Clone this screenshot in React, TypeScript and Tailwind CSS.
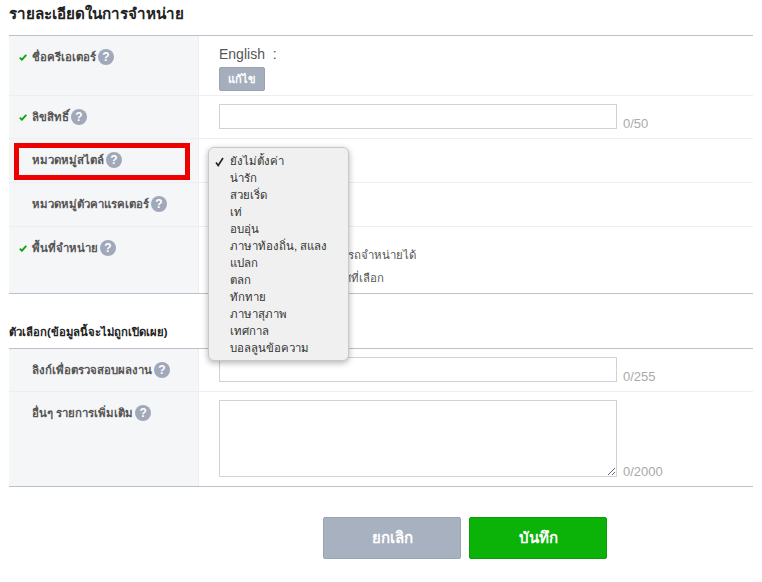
const font = "font-['Liberation_Sans','Noto_Sans',sans-serif]";

function Help() {
  return (
    <span className="inline-flex h-4 w-4 shrink-0 items-center justify-center rounded-full bg-[#a0a8b9] text-xs font-bold leading-none text-white">?</span>
  );
}

function Check() {
  return (
    <svg width="8" height="7" viewBox="0 0 8 7" className="absolute left-[10px] top-[18px]">
      <path d="M0.8 3.6 L2.9 5.7 L7.3 0.8" fill="none" stroke="#10a810" strokeWidth="1.9" />
    </svg>
  );
}

function Row({ label, checked, height, last, children }: { label: string; checked?: boolean; height: string; last?: boolean; children?: React.ReactNode }) {
  return (
    <div className={`flex ${height} ${last ? "" : "border-b border-[#eceef1]"}`}>
      <div className="relative flex w-[190px] shrink-0 items-start gap-[2px] border-r border-[#eceef1] bg-[#f5f6f8] pl-[23px] pt-[13px] text-[11.4px] font-bold text-[#555]">
        {checked && <Check />}
        <span className="leading-[17px]">{label}</span>
        <Help />
      </div>
      <div className="relative min-w-0 flex-1 pl-5">{children}</div>
    </div>
  );
}

function Field({ counter }: { counter: string }) {
  return (
    <div className="flex items-end pt-2">
      <div className="h-[25px] w-[398px] border border-[#d0d2d5] bg-white" />
      <span className="mb-[-4px] ml-1.5 text-[13px] leading-[18px] text-[#aaa]">{counter}</span>
    </div>
  );
}

const items = ["น่ารัก", "สวยเริ่ด", "เท่", "อบอุ่น", "ภาษาท้องถิ่น, สแลง", "แปลก", "ตลก", "ทักทาย", "ภาษาสุภาพ", "เทศกาล", "บอลลูนข้อความ"];

export default function App() {
  return (
    <div className={`relative h-[582px] w-[762px] overflow-hidden bg-white ${font}`}>
      <h2 className="pl-[9px] pt-[4px] text-[15.2px] font-bold leading-[20px] text-[#222]">รายละเอียดในการจำหน่าย</h2>

      <div className="mx-[9px] mt-[11px] border-y border-[#bcc1c9]">
        <Row label="ชื่อครีเอเตอร์" checked height="h-[60px]">
          <div className="pt-[9px] text-sm leading-[18px] text-[#555]">English &nbsp;:</div>
          <div className="mt-[4px] flex h-6 w-[46px] items-center justify-center rounded-[2px] border border-[#9aa3b3] bg-[#a5aebd] text-[11px] font-bold text-white">แก้ไข</div>
        </Row>
        <Row label="ลิขสิทธิ์" checked height="h-[43px]">
          <Field counter="0/50" />
        </Row>
        <Row label="หมวดหมู่สไตล์" height="h-[44px]" />
        <Row label="หมวดหมู่ตัวคาแรคเตอร์" height="h-[44px]" />
        <Row label="พื้นที่จำหน่าย" checked height="h-[66px]" last>
          <div className="pl-[41px] pt-[17px] text-[11.4px] leading-[23px] text-[#555]">
            <div>ทุกประเทศที่สามารถจำหน่ายได้</div>
            <div>ขายเฉพาะประเทศที่เลือก</div>
          </div>
        </Row>
      </div>

      <h3 className="pl-[9px] pt-[29px] text-[11.3px] font-bold leading-[18px] text-[#222]">ตัวเลือก(ข้อมูลนี้จะไม่ถูกเปิดเผย)</h3>

      <div className="mx-[9px] mt-[7px] border-y border-[#bcc1c9]">
        <Row label="ลิงก์เพื่อตรวจสอบผลงาน" height="h-[43px]">
          <Field counter="0/255" />
        </Row>
        <Row label="อื่นๆ รายการเพิ่มเติม" height="h-[94px]" last>
          <div className="flex items-end pt-2">
            <textarea className="h-[77px] w-[398px] border border-[#d0d2d5] bg-white" />
            <span className="mb-[-4px] ml-1.5 text-[13px] leading-[18px] text-[#aaa]">0/2000</span>
          </div>
        </Row>
      </div>

      <div className="mt-[30px] flex justify-end gap-2 pr-[155px]">
        <div className="flex h-[42px] w-[138px] items-center justify-center rounded-[2px] border border-[#9aa3b3] bg-[#a8b1c0] text-[15px] font-bold text-white">ยกเลิก</div>
        <div className="flex h-[42px] w-[138px] items-center justify-center rounded-[2px] border border-[#0a9f08] bg-[#0bb208] text-[15px] font-bold text-white">บันทึก</div>
      </div>

      <div className="absolute left-[14px] top-[143px] h-[37px] w-[176px] border-[5px] border-[#ee0000]" />

      <div className="absolute left-[208px] top-[147px] h-[214px] w-[141px] rounded-[6px] border border-[#c8c8c8] bg-[#f0f0f0] pt-[5px] text-[11.4px] leading-[17px] text-[#333] shadow-[0_2px_6px_rgba(0,0,0,0.3)]">
        <div className="relative pl-[21px]">
          <svg width="9" height="10" viewBox="0 0 9 10" className="absolute left-[6px] top-[4px]">
            <path d="M1 5.5 L3.2 8.5 L8 1" fill="none" stroke="#222" strokeWidth="1.6" />
          </svg>
          ยังไม่ตั้งค่า
        </div>
        {items.map((t) => (
          <div key={t} className="pl-[21px]">{t}</div>
        ))}
      </div>
    </div>
  );
}
